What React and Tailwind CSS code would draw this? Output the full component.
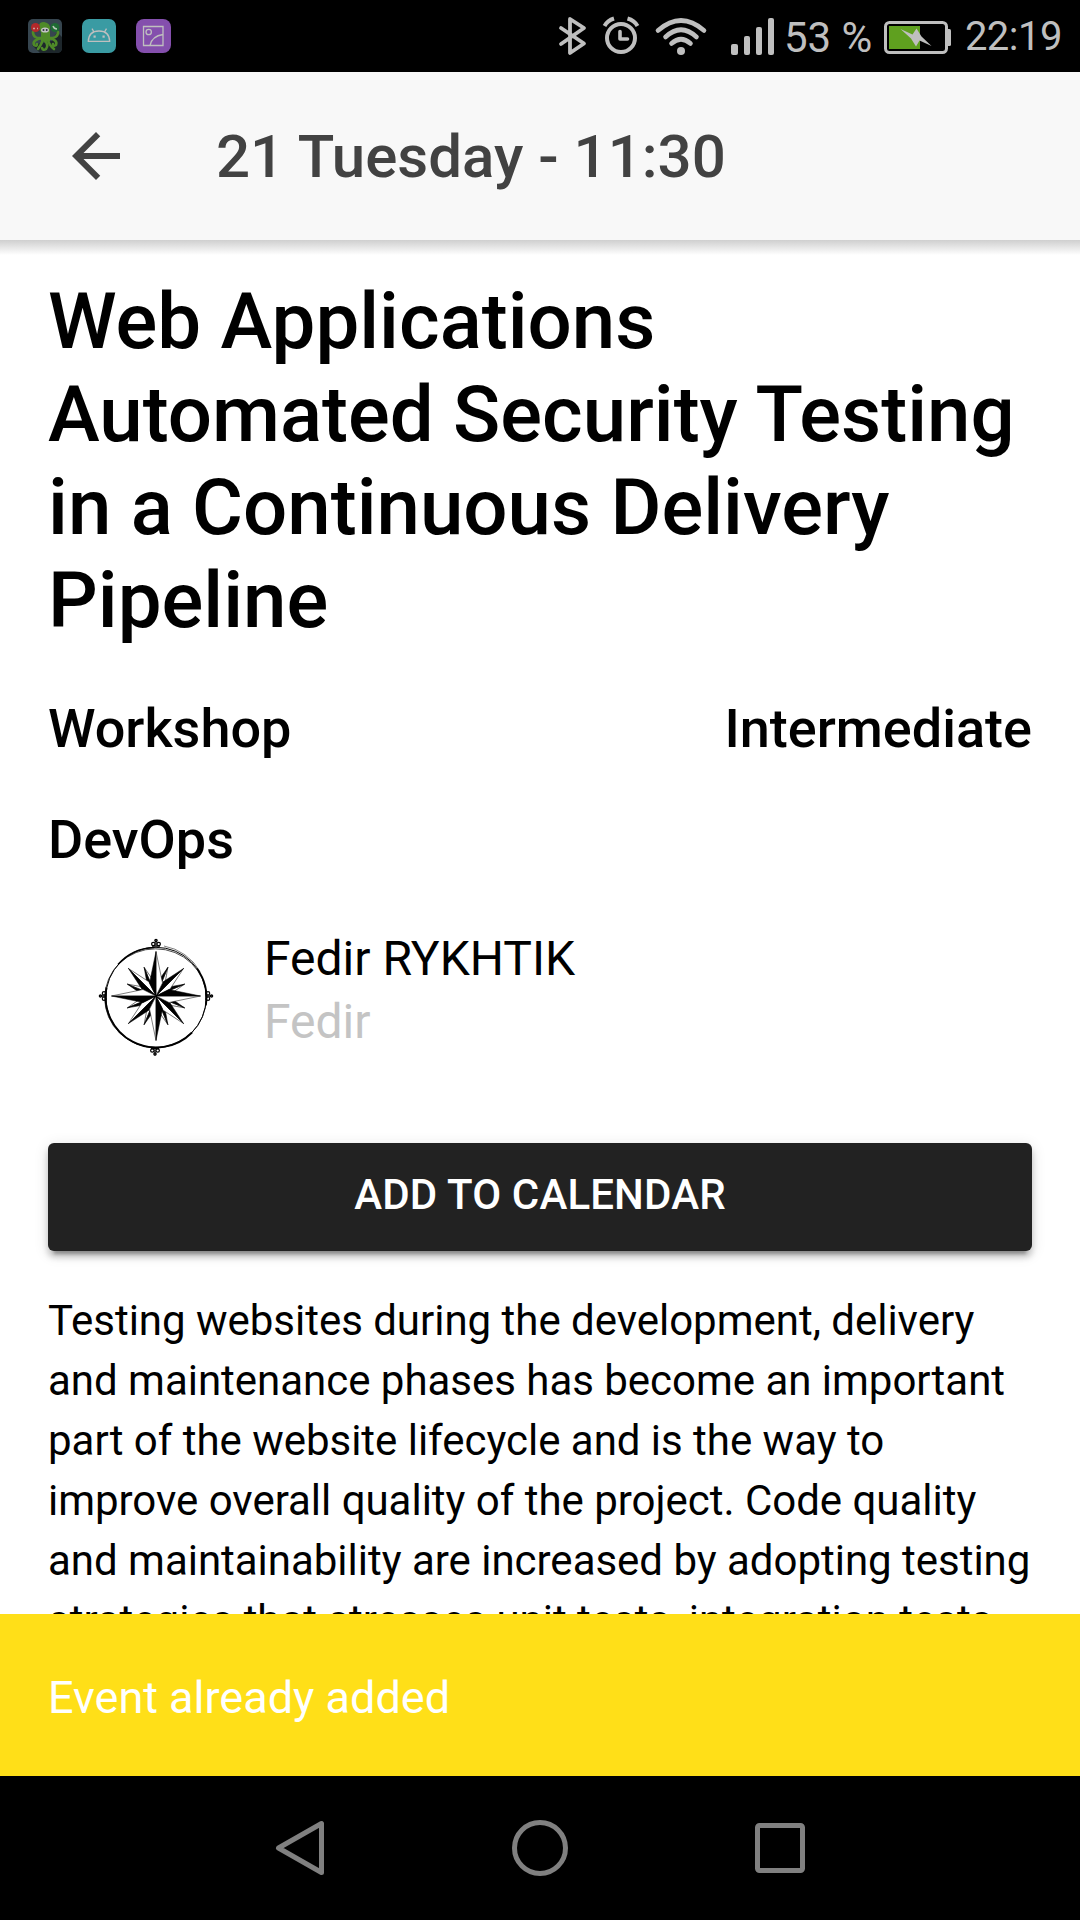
const octo = '#4f8a28';

function AppIcons() {
  return (
    <div className="flex gap-5">
      <svg width="34" height="34" viewBox="0 0 34 34">
        <rect width="34" height="34" rx="5" fill="#36454f" />
        <path d="M4 26L12 34H29Q34 34 34 29V18L29 13L24 22Z" fill="#1d262b" />
        <g fill="none" stroke={octo} strokeWidth="2.6" strokeLinecap="round">
          <path d="M5 13Q5 20 14 19" />
          <path d="M30 13Q30 20 20 19" />
          <path d="M14 19Q4 21 6 26Q9 28 9 25" />
          <path d="M21 19Q30 21 28 26Q25 28 25 25" />
          <path d="M15 21Q13 26 10 30" />
          <path d="M20 21Q21 26 26 30" />
          <path d="M17 22Q21 26 18 30Q15 32 14 29" />
        </g>
        <path d="M11 7Q11 3 16 3Q23 4 22 11L22 22H13L13 13Q11 11 11 7Z" fill={octo} />
        <circle cx="7.5" cy="8.5" r="4.5" fill="#b3282a" />
        <circle cx="27" cy="8.5" r="4.5" fill="#1f6b34" />
        <path d="M5 9.5h2M9 9.5h1" stroke="#c8a0a0" strokeWidth="1.5" />
        <path d="M25 7Q26 10 29 10" stroke="#b8c8b8" strokeWidth="1.5" fill="none" />
        <ellipse cx="17" cy="11" rx="4" ry="2.6" fill="#c4c4c4" />
        <circle cx="15.5" cy="11" r="1" fill="#334" />
        <circle cx="18.7" cy="11" r="1" fill="#334" />
      </svg>
      <svg width="34" height="34" viewBox="0 0 34 34">
        <rect width="34" height="34" rx="7" fill="#3a9ba3" />
        <path d="M6.3 22.3Q6.7 12 17 12Q27.300 12 27.700 22.300Z M10 9.700L12 13 M24.500 9.700L22.500 13" fill="none" stroke="#bfbfbf" strokeWidth="1.3" />
        <rect x="11.500" y="16.500" width="2.200" height="2.200" fill="#bfbfbf" />
        <rect x="20.500" y="16.500" width="2.200" height="2.200" fill="#bfbfbf" />
      </svg>
      <svg width="35" height="34" viewBox="0 0 35 34">
        <rect width="35" height="34" rx="8" fill="#844fad" />
        <path d="M7.500 7.500H27V26.500H7.500Z M14 26.500Q16 17 27 15.500" fill="none" stroke="#bfbfbf" strokeWidth="1.300" />
        <circle cx="12.700" cy="13" r="2.700" fill="none" stroke="#bfbfbf" strokeWidth="1.300" />
      </svg>
    </div>
  );
}

function SystemIcons() {
  return (
    <svg width="216" height="72" viewBox="558 0 216 72" fill="none" stroke="#bfbfbf">
      <path d="M561 28L584 43.500L570 53V19L584 28L561 44" strokeWidth="3.800" strokeLinejoin="round" strokeLinecap="round" />
      <circle cx="621" cy="38" r="14" strokeWidth="4" />
      <path d="M620 31.500V39H627.500" strokeWidth="3.600" strokeLinecap="round" strokeLinejoin="round" />
      <path d="M604.500 26Q607.500 20.500 614 18.500M627.500 18.500Q634.500 20.500 637.500 26" strokeWidth="4" />
      <path d="M658 30.500Q681 10.500 704 30.500M665.500 37Q681 22.500 696.500 37M671.500 43.500Q681 35 690.500 43.500" strokeWidth="4.600" strokeLinecap="round" />
      <circle cx="681" cy="51" r="4" fill="#bfbfbf" stroke="none" />
      <g fill="#bfbfbf" stroke="none">
        <rect x="731" y="44" width="7" height="11" rx="2" />
        <rect x="744" y="36" width="6" height="19" rx="2" />
        <rect x="756" y="27" width="6" height="28" rx="2" />
        <rect x="768" y="18" width="6" height="37" rx="2" />
      </g>
    </svg>
  );
}

function Battery() {
  return (
    <svg width="67" height="33" viewBox="0 0 67 33">
      <rect x="1.500" y="1.500" width="61" height="30" rx="4" fill="none" stroke="#bfbfbf" strokeWidth="3" />
      <path d="M64 8h1.500q1.500 0 1.500 1.500v14q0 1.500-1.500 1.500H64z" fill="#bfbfbf" />
      <rect x="5" y="5" width="31" height="23" fill="#5fa01f" />
      <path d="M16.500 8L28.500 13.500L32.500 7.500L37.500 15.500L47.500 25L35.500 19.500L32 25.500L27 17.500Z" fill="#bfbfbf" />
    </svg>
  );
}

/* One point of the compass star: a filled half and an outlined half. */
function Ray({ angle, length, width, shoulder }) {
  return (
    <g transform={`rotate(${angle})`}>
      <path d={`M0 0L${width} ${-shoulder}L0 ${-length}Z`} fill="#fff" stroke="#000" strokeWidth="0.500" />
      <path d={`M0 0L${-width} ${-shoulder}L0 ${-length}Z`} fill="#000" stroke="#000" strokeWidth="0.500" />
    </g>
  );
}

function Compass() {
  return (
    <svg width="120" height="124" viewBox="-60 -60 120 124">
      <g transform="translate(0 1.500)">
        <circle r="50.200" fill="none" stroke="#000" strokeWidth="1" />
        <ellipse rx="50.800" ry="49.300" fill="none" stroke="#000" strokeWidth="0.700" transform="translate(-0.500 .6)" />
        <path d="M-49.500 -10A50.500 50.500 0 0 0 36 35" fill="none" stroke="#000" strokeWidth="1.900" />
        <path d="M-38 -33A50.500 50.500 0 0 1 -2 -50M41 -29A50 50 0 0 1 50 8" fill="none" stroke="#000" strokeWidth="1.600" />
        <path d="M8 -51.500A52 52 0 0 1 44 -26" fill="none" stroke="#000" strokeWidth="0.500" />
      </g>
      {[0, 90, 180, 270].map((a) => (
        <g key={a} transform={a === 180 ? 'translate(-1 2.500) rotate(180)' : `rotate(${a})`} fill="none" stroke="#000" strokeWidth="1.200">
          <circle cx="-2.700" cy="-52" r="1.700" />
          <circle cx="2.700" cy="-52" r="1.700" />
          <path d="M0 -57V-51M-4 -50H4" strokeWidth="1.300" />
          <circle cx="0" cy="-55.500" r="1.200" />
        </g>
      ))}
      {[22.5, 67.5, 112.5, 157.5, 202.5, 247.5, 292.5, 337.5].map((a) => (
        <Ray key={a} angle={a} length={31} width={3.5} shoulder={15} />
      ))}
      {[45, 135, 225, 315].map((a) => (
        <Ray key={a} angle={a} length={39} width={5} shoulder={15} />
      ))}
      {[0, 90, 180, 270].map((a) => (
        <Ray key={a} angle={a} length={44.5} width={6.5} shoulder={13} />
      ))}
    </svg>
  );
}

function StatusBar() {
  return (
    <div className="flex h-[72px] shrink-0 items-center bg-black pl-[28px] pr-[18px] text-[#bfbfbf]">
      <AppIcons />
      <div className="ml-auto flex items-center">
        <SystemIcons />
        <span className="ml-[10px] w-[100px] whitespace-nowrap pt-[3px] text-[42px] leading-[72px]">53 %</span>
        <div className="pt-[3px]"><Battery /></div>
        <span className="ml-[14px] pt-[2px] text-[40px] leading-[72px] tracking-[-0.5px]">22:19</span>
      </div>
    </div>
  );
}

export default function App() {
  return (
    <div className="flex h-[1920px] w-[1080px] flex-col overflow-hidden bg-white font-['Roboto',sans-serif] text-black">
      <StatusBar />
      <header className="flex h-[168px] shrink-0 items-center bg-[#f8f8f8] pl-[60px] text-[#424242]">
        <svg width="72" height="72" viewBox="0 0 24 24" fill="currentColor">
          <path d="M20 11H7.830l5.590-5.590L12 4l-8 8 8 8 1.410-1.410L7.830 13H20v-2z" />
        </svg>
        <h1 className="ml-[84px] pt-[2px] text-[60px] font-medium leading-[72px]">21 Tuesday - 11:30</h1>
      </header>
      <div className="h-[15px] shrink-0 bg-linear-to-b from-[#cfcfcf] to-white" />

      <main className="flex min-h-0 flex-1 flex-col overflow-hidden px-[48px]">
        <h2 className="mt-[20px] whitespace-nowrap text-[78px] font-medium leading-[93px]">
          Web Applications<br />Automated Security Testing<br />in a Continuous Delivery<br />Pipeline
        </h2>
        <div className="mt-[50px] flex justify-between text-[54px] font-medium leading-[64px]">
          <span>Workshop</span>
          <span>Intermediate</span>
        </div>
        <div className="mt-[47px] text-[54px] font-medium leading-[64px]">DevOps</div>
        <div className="mt-[55px] flex h-[150px] shrink-0 pl-[48px]">
          <div className="pt-[9px]"><Compass /></div>
          <div className="ml-[48px] text-[48px] leading-[63px]">
            <div>Fedir RYKHTIK</div>
            <div className="text-[#c4c4c4]">Fedir</div>
          </div>
        </div>
        <button className="mt-[66px] h-[108px] shrink-0 rounded-[6px] bg-[#222222] pb-[6px] text-[42px] font-medium tracking-[0.15px] text-white shadow-[0_6px_6px_0_rgba(0,0,0,0.2),0_9px_3px_-6px_rgba(0,0,0,0.25),0_3px_15px_0_rgba(0,0,0,0.12)]">
          ADD TO CALENDAR
        </button>
        <p className="mt-[40px] whitespace-nowrap text-[42px] leading-[60px] tracking-[-0.02px]">
          Testing websites during the development, delivery<br />
          and maintenance phases has become an important<br />
          part of the website lifecycle and is the way to<br />
          improve overall quality of the project. Code quality<br />
          and maintainability are increased by adopting testing<br />
          strategies that stresses unit tests, integration tests
        </p>
      </main>

      <div className="flex h-[162px] shrink-0 items-center bg-[#ffdf18] px-[48px] pt-[6px] text-[45px] text-white">
        Event already added
      </div>
      <nav className="flex h-[144px] shrink-0 items-center justify-between bg-black px-[273px]">
        <svg width="54" height="60" viewBox="0 0 54 60" fill="none" stroke="#808080" strokeWidth="5" strokeLinejoin="round">
          <path d="M48.500 5.500V54.500L5.500 30Z" />
        </svg>
        <svg width="56" height="56" viewBox="0 0 56 56" fill="none" stroke="#808080" strokeWidth="5">
          <circle cx="28" cy="28" r="25.500" />
        </svg>
        <svg width="54" height="54" viewBox="0 0 54 54" fill="none" stroke="#808080" strokeWidth="5">
          <rect x="4.500" y="4.500" width="45" height="45" rx="2" />
        </svg>
      </nav>
    </div>
  );
}
